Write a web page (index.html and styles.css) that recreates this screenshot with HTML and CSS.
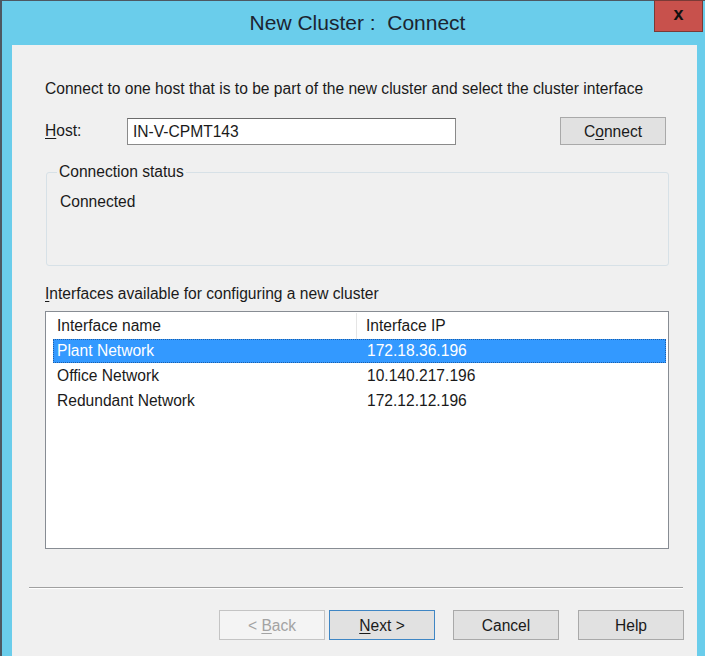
FILE: index.html
```html
<!DOCTYPE html>
<html>
<head>
<meta charset="utf-8">
<link rel="stylesheet" href="styles.css">
</head>
<body>
<div class="window">
  <div class="titlebar">
    <div class="title">New Cluster :&nbsp; Connect</div>
    <div class="close">x</div>
  </div>
  <div class="client">
    <div class="intro">Connect to one host that is to be part of the new cluster and select the cluster interface</div>
    <div class="host-row">
      <label class="host-label"><u>H</u>ost:</label>
      <div class="input">IN-V-CPMT143</div>
      <div class="btn connect">C<u>o</u>nnect</div>
    </div>
    <fieldset class="group">
      <legend>Connection status</legend>
      <div class="status">Connected</div>
    </fieldset>
    <div class="list-label"><u>I</u>nterfaces available for configuring a new cluster</div>
    <div class="list">
      <div class="row header">
        <div class="c1">Interface name</div>
        <div class="c2">Interface IP</div>
      </div>
      <div class="row selected">
        <div class="c1">Plant Network</div>
        <div class="c2">172.18.36.196</div>
      </div>
      <div class="row">
        <div class="c1">Office Network</div>
        <div class="c2">10.140.217.196</div>
      </div>
      <div class="row">
        <div class="c1">Redundant Network</div>
        <div class="c2">172.12.12.196</div>
      </div>
    </div>
    <div class="separator"></div>
    <div class="buttons">
      <div class="btn disabled">&lt; <u>B</u>ack</div>
      <div class="btn default"><u>N</u>ext &gt;</div>
      <div class="btn cancel">Cancel</div>
      <div class="btn help">Help</div>
    </div>
  </div>
</div>
</body>
</html>
```
FILE: styles.css
```css
* { box-sizing: border-box; }
html, body { margin: 0; padding: 0; }
body {
  width: 705px;
  height: 656px;
  overflow: hidden;
  font-family: "Liberation Sans", Arial, sans-serif;
  font-size: 15.6px;
  color: #1a1a1a;
  background: #ffffff;
}
.window {
  width: 705px;
  height: 656px;
  background: #6acdeb;
  border-left: 2px solid #4d5862;
  border-top: 1px solid #4d5862;
  display: flex;
  flex-direction: column;
  padding: 0 8px 0 10px;
}
.titlebar {
  height: 44px;
  flex: none;
  position: relative;
  display: flex;
  align-items: center;
  justify-content: center;
}
.title {
  font-size: 21px;
  color: #1c2430;
  margin-top: -1px;
  margin-left: 6px;
}
.close {
  position: absolute;
  right: -6px;
  top: -1px;
  width: 49px;
  height: 32px;
  background: #c8514c;
  border: 1px solid #7a3a36;
  color: #111;
  font-weight: bold;
  font-size: 18px;
  text-align: center;
  line-height: 26px;
}
.client {
  flex: 1;
  background: #f0f0f0;
  padding: 0 0 0 33px;
  display: flex;
  flex-direction: column;
  position: relative;
}
.intro {
  margin-top: 35px;
  height: 18px;
  line-height: 18px;
  white-space: nowrap;
}
.host-row {
  margin-top: 19px;
  display: flex;
  align-items: center;
  height: 28px;
}
.host-label { width: 82px; line-height: 30px; }
.input {
  width: 329px;
  height: 27px;
  background: #fff;
  border: 1px solid #8a8a8a;
  border-top-color: #6b6b6b;
  padding-left: 5px;
  line-height: 26px;
}
.btn {
  height: 30px;
  width: 106px;
  background: #e1e1e1;
  border: 1px solid #a9a9a9;
  text-align: center;
  line-height: 30px;
  color: #1a1a1a;
}
.connect {
  margin-left: 104px;
  height: 28px;
  line-height: 27px;
}
.group {
  margin: 18px 0 0 1px;
  width: 623px;
  height: 103px;
  border: 1px solid #d7e1e7;
  border-radius: 3px;
  padding: 0 12px;
  position: relative;
}
.group legend {
  padding: 0 2px;
  margin-left: -2px;
  line-height: 18px;
}
.status {
  margin-top: 12px;
  margin-left: 1px;
  line-height: 18px;
}
.list-label {
  margin-top: 19px;
  line-height: 18px;
}
.list {
  margin-top: 8px;
  width: 624px;
  height: 238px;
  background: #fff;
  border: 1px solid #878c93;
  padding: 1px 2px 0 7px;
}
.row {
  display: flex;
  height: 25px;
  line-height: 25px;
  white-space: nowrap;
}
.row .c1 { width: 304px; padding-left: 4px; }
.row .c2 { flex: 1; padding-left: 10px; }
.row.header {
  height: 26px;
  line-height: 26px;
  margin-left: -6px;
  padding-left: 6px;
}
.row.header .c1 { border-right: 1px solid #e5e5e5; width: 310px; padding-left: 10px; margin-left: -6px; }
.row.header .c2 { padding-left: 9px; }
.row.selected {
  background: #3399ff;
  color: #fff;
  border: 1px dotted #1e5ea8;
  height: 24px;
  line-height: 22px;
}
.row.selected .c1 { padding-left: 3px; }
.row.selected .c2 { padding-left: 9px; }
.separator {
  margin: 38px 0 0 -16px;
  width: 654px;
  height: 2px;
  border-top: 1px solid #a0a0a0;
  border-bottom: 1px solid #ffffff;
}
.buttons {
  margin-top: 21px;
  margin-left: 174px;
  display: flex;
}
.buttons .btn { width: 106px; }
.btn.disabled {
  background: #f4f4f4;
  border-color: #c4c4c4;
  color: #a3a3a3;
}
.btn.default {
  margin-left: 4px;
  border-color: #3f86c4;
}
.btn.cancel { margin-left: 18px; }
.btn.help { margin-left: 19px; }
u { text-decoration: underline; text-underline-offset: 2px; }
```
